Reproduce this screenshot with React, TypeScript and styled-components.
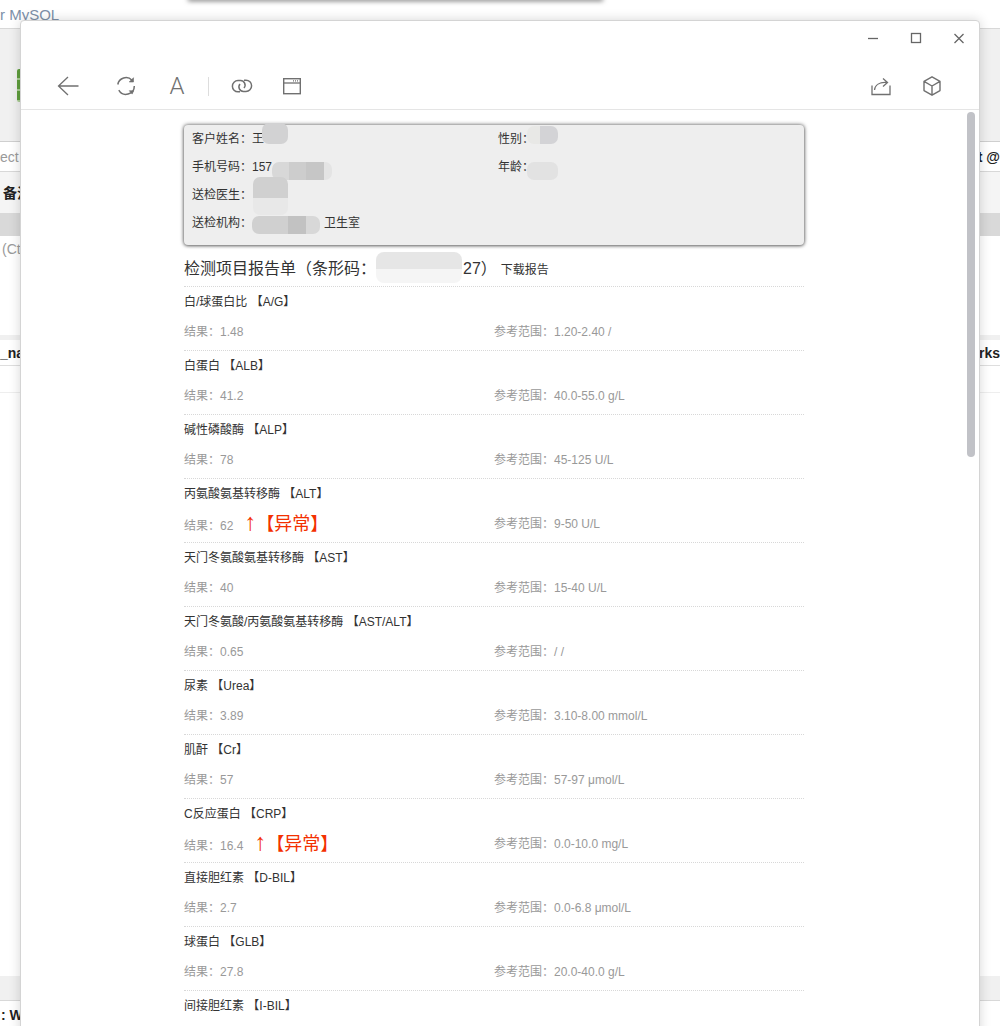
import React from "react";
import styled, { createGlobalStyle } from "styled-components";

const Global = createGlobalStyle`
  html, body { margin: 0; padding: 0; height: 1026px; overflow: hidden; background: #fff; }
  #root { height: 1026px; }
  * { box-sizing: border-box; text-spacing-trim: space-all; }
`;
const sans = `"Liberation Sans", "Noto Sans CJK SC", sans-serif`;

const Page = styled.div`
  position: relative; width: 1000px; height: 1026px; overflow: hidden; font-family: ${sans}; background: #fff;
`;
/* background application behind the dialog */
const BackRow = styled.div<{ $h: number; $bg?: string; $line?: string }>`
  height: ${(p) => p.$h}px;
  background: ${(p) => p.$bg || "#fff"};
  border-bottom: 1px solid ${(p) => p.$line || "transparent"};
  display: flex; align-items: center; justify-content: space-between;
  font-size: 14px; color: #222; white-space: nowrap;
`;
const BackTitle = styled.span`font-size: 15px; color: #7d90a9;`;
const BackMuted = styled.span`color: #9a9a9a; font-size: 14px;`;
const BackStrong = styled.span`font-weight: 700; font-size: 14px; color: #222;`;
const BackLeft = styled.span<{ $pad: number; $pt?: number }>`
  padding-left: ${(p) => p.$pad}px; padding-top: ${(p) => p.$pt || 0}px;
`;
const GreenTool = styled.div`
  width: 20px; height: 33px; margin-left: 17px; border-radius: 2px;
  background: repeating-linear-gradient(#5f9e3d 0 9px, #a9cc93 9px 11px);
`;
const TopShadow = styled.div`
  position: absolute; left: 188px; top: -4px; width: 415px; height: 4px; background: #888;
  box-shadow: 0 1px 5px rgba(0,0,0,.55);
`;
/* dialog */
const Dialog = styled.div`
  position: absolute; left: 20px; top: 20px; width: 960px; height: 1020px;
  display: flex; flex-direction: column;
  background: #fff; border: 1px solid #d4d4d4; border-radius: 4px 4px 0 0;
  box-shadow: 0 0 12px rgba(0,0,0,.16);
`;
const TitleBar = styled.div`
  height: 34px; flex: none; display: flex; justify-content: flex-end; align-items: center; gap: 17px; padding: 0 7px 0 0;
`;
const WinBtn = styled.div`
  width: 26px; height: 26px; display: flex; align-items: center; justify-content: center; color: #666;
`;
const Toolbar = styled.div`
  height: 55px; flex: none; display: flex; align-items: center; justify-content: space-between;
  padding: 8px 35px 0 35px; border-bottom: 1px solid #e5e5e5;
`;
const ToolGroup = styled.div`display: flex; align-items: center;`;
const ToolBtn = styled.div<{ $ml?: number }>`
  width: 24px; height: 24px; margin-left: ${(p) => p.$ml || 0}px;
  display: flex; align-items: center; justify-content: center; color: #707070;
`;
const LetterIcon = styled.span`
  font-family: "Roboto", sans-serif; font-weight: 300; font-size: 24px; line-height: 24px; color: #707070;
`;
const Sep = styled.div`width: 1px; height: 19px; background: #ddd; margin-left: 19px;`;
const Body = styled.div`
  flex: 1; min-height: 0; position: relative; overflow: hidden; padding: 15px 0 0 163px;
`;
const Scrollbar = styled.div`
  position: absolute; left: 946px; top: 2px; width: 8px; height: 345px; border-radius: 4px; background: #c1c2c7;
`;
const Column = styled.div`width: 620px;`;
const Card = styled.div`
  position: relative; height: 120px; padding: 0 8px; background: #eee; border-radius: 4px;
  box-shadow: 0 0 4px rgba(0,0,0,.65), 0 1px 3px rgba(0,0,0,.3);
  display: grid; grid-template-columns: 306px 1fr; grid-auto-rows: 28px; align-content: start;
  font-size: 12px; color: #333;
`;
const CardCell = styled.div`line-height: 28px; white-space: nowrap;`;
const Patch = styled.div<{ $x: number; $y: number; $w: number; $h: number; $bg: string; $r?: number }>`
  position: absolute; left: ${(p) => p.$x}px; top: ${(p) => p.$y}px; width: ${(p) => p.$w}px; height: ${(p) => p.$h}px;
  background: ${(p) => p.$bg}; border-radius: ${(p) => p.$r ?? 7}px;
`;
const Heading = styled.div`
  height: 41px; display: flex; align-items: center; font-size: 16px; color: #333; white-space: nowrap; padding-top: 3px;
`;
const BarPatch = styled.span`
  display: inline-block; width: 86px; height: 31px; border-radius: 8px; margin: 0 1px 0 0;
  background: linear-gradient(#e6e6e6 0 17px, #f5f5f5 17px);
`;
const DownloadLink = styled.span`font-size: 12px; margin-left: 4px; padding-top: 2px;`;
const Row = styled.div`
  height: 64px; border-top: 1px dotted #d8d8d8; font-size: 12px;
`;
const RowTitle = styled.div`height: 32px; line-height: 30px; color: #333; white-space: nowrap;`;
const RowValues = styled.div`height: 31px; display: grid; grid-template-columns: 310px 1fr; color: #999;`;
const ValueCell = styled.div<{ $alert?: boolean }>`
  line-height: 27px; white-space: nowrap; padding-top: ${(p) => (p.$alert ? 2 : 0)}px;
`;
const Alert = styled.span`
  font-size: 18px; line-height: 18px; color: #f33000; margin-left: 11px;
`;
const AlertArrow = styled.span`font-size: 24px; line-height: 18px;`;

const Icon = ({ w, h, children }: { w: number; h: number; children: React.ReactNode }) => (
  <svg width={w} height={h} viewBox={`0 0 ${w} ${h}`} fill="none" stroke="currentColor" strokeWidth="1.3">
    {children}
  </svg>
);

const rows: { name: string; result: string; range: string; alert?: boolean }[] = [
  { name: "白/球蛋白比 【A/G】", result: "1.48", range: "1.20-2.40 /" },
  { name: "白蛋白 【ALB】", result: "41.2", range: "40.0-55.0 g/L" },
  { name: "碱性磷酸酶 【ALP】", result: "78", range: "45-125 U/L" },
  { name: "丙氨酸氨基转移酶 【ALT】", result: "62", range: "9-50 U/L", alert: true },
  { name: "天门冬氨酸氨基转移酶 【AST】", result: "40", range: "15-40 U/L" },
  { name: "天门冬氨酸/丙氨酸氨基转移酶 【AST/ALT】", result: "0.65", range: "/ /" },
  { name: "尿素 【Urea】", result: "3.89", range: "3.10-8.00 mmol/L" },
  { name: "肌酐 【Cr】", result: "57", range: "57-97 μmol/L" },
  { name: "C反应蛋白 【CRP】", result: "16.4", range: "0.0-10.0 mg/L", alert: true },
  { name: "直接胆红素 【D-BIL】", result: "2.7", range: "0.0-6.8 μmol/L" },
  { name: "球蛋白 【GLB】", result: "27.8", range: "20.0-40.0 g/L" },
  { name: "间接胆红素 【I-BIL】", result: "", range: "" },
];

export default function App() {
  return (
    <Page>
      <Global />
      <BackRow $h={29} $line="#d8d8d8"><BackTitle>r MySQL</BackTitle></BackRow>
      <BackRow $h={113} $bg="#f0f0f0" $line="#cfcfcf"><GreenTool /></BackRow>
      <BackRow $h={30} $line="#d8d8d8">
        <BackMuted>ect</BackMuted><BackStrong>nt @</BackStrong>
      </BackRow>
      <BackRow $h={41} $bg="#f5f5f5">
        <BackLeft $pad={3}><BackStrong>备注</BackStrong></BackLeft>
      </BackRow>
      <BackRow $h={23} $bg="#d9d9d9" />
      <BackRow $h={26}><BackLeft $pad={2}><BackMuted>(Ctrl</BackMuted></BackLeft></BackRow>
      <BackRow $h={73} />
      <BackRow $h={5} $bg="#f0f0f0" />
      <BackRow $h={26} $line="#dedede">
        <BackStrong>_name</BackStrong><BackStrong>rks</BackStrong>
      </BackRow>
      <BackRow $h={27} $line="#eeeeee" />
      <BackRow $h={583} />
      <BackRow $h={25} $bg="#f0f0f0" $line="#d8d8d8" />
      <BackRow $h={26}><BackLeft $pad={1} $pt={3}><BackStrong>: W</BackStrong></BackLeft></BackRow>
      <TopShadow />

      <Dialog>
        <TitleBar>
          <WinBtn><Icon w={12} h={12}><path d="M1 6.500h10" /></Icon></WinBtn>
          <WinBtn><Icon w={12} h={12}><rect x="1.500" y="1.500" width="9" height="9" /></Icon></WinBtn>
          <WinBtn><Icon w={12} h={12}><path d="M1.500 2l9 9M10.500 2l-9 9" /></Icon></WinBtn>
        </TitleBar>
        <Toolbar>
          <ToolGroup>
            <ToolBtn>
              <Icon w={24} h={24}><path d="M2.500 12h20M12 3L2.500 12l9.500 9" /></Icon>
            </ToolBtn>
            <ToolBtn $ml={34}>
              <Icon w={24} h={24}>
                <path d="M3.800 10.500A8.300 8.300 0 0 1 18 6.200" strokeWidth="1.500" />
                <path d="M19.500 3.700v4.300h-4.300z" fill="currentColor" strokeWidth="0.600" />
                <path d="M20.300 12A8.300 8.300 0 0 1 4.800 16.200" strokeWidth="1.500" />
                <path d="M15.300 16.700h4.300l-1.400 3.400z" fill="currentColor" strokeWidth="0.600" />
              </Icon>
            </ToolBtn>
            <ToolBtn $ml={27}><LetterIcon>A</LetterIcon></ToolBtn>
            <Sep />
            <ToolBtn $ml={21}>
              <Icon w={24} h={24}>
                <path d="M10 17.800H8a5.600 5.600 0 0 1 0-11.200h2.500a4.500 4.500 0 0 1 3.500 7.400" strokeWidth="1.500" />
                <path d="M14 6.200h2a5.600 5.600 0 0 1 0 11.200h-2.500a4.500 4.500 0 0 1-3.500-7.400" strokeWidth="1.500" />
              </Icon>
            </ToolBtn>
            <ToolBtn $ml={26}>
              <Icon w={24} h={24}>
                <rect x="3.700" y="4.700" width="16.600" height="15" strokeWidth="1.400" />
                <path d="M3.700 9h16.600" />
                <path d="M13 6.900h5" strokeDasharray="1 1" />
              </Icon>
            </ToolBtn>
          </ToolGroup>
          <ToolGroup>
            <ToolBtn>
              <Icon w={24} h={24}>
                <path d="M3 11.500v9h18v-9" />
                <path d="M5.500 16c.5-5 5-8 12-7.500M14 4.500l4.500 4-4.500 4" />
              </Icon>
            </ToolBtn>
            <ToolBtn $ml={27}>
              <Icon w={24} h={24}>
                <path d="M12 2.800l8 4.600v9.200l-8 4.600-8-4.600V7.400zM4 7.400l8 4.600 8-4.600M12 12v9.200" strokeWidth="1.400" strokeLinejoin="round" />
              </Icon>
            </ToolBtn>
          </ToolGroup>
        </Toolbar>
        <Body>
          <Scrollbar />
          <Column>
            <Card>
              <CardCell>客户姓名：王</CardCell><CardCell>性别：</CardCell>
              <CardCell>手机号码：157</CardCell><CardCell>年龄：</CardCell>
              <CardCell>送检医生：</CardCell><CardCell />
              <CardCell>送检机构：　　　　　　卫生室</CardCell><CardCell />
              <Patch $x={78} $y={-2} $w={26} $h={21} $bg="#d2d2d3" />
              <Patch $x={343} $y={1} $w={31} $h={18} $bg="linear-gradient(90deg,#e8e8e6 0 13px,#d3d3d6 13px)" />
              <Patch $x={88} $y={37} $w={60} $h={18} $bg="linear-gradient(90deg,#d8d8d8 0 17px,#cdcdcd 17px 34px,#c6c6c6 34px 52px,#e4e4e4 52px)" />
              <Patch $x={343} $y={37} $w={31} $h={18} $bg="#e2e2e2" />
              <Patch $x={69} $y={52} $w={35} $h={38} $bg="linear-gradient(#d0d0d0 0 21px,#e8e8e8 21px)" />
              <Patch $x={68} $y={91} $w={68} $h={18} $bg="linear-gradient(90deg,#d0d0d0 0 36px,#c2c2c2 36px 54px,#d8d8d8 54px)" />
            </Card>
            <Heading>
              检测项目报告单（条形码：<BarPatch />27）<DownloadLink>下载报告</DownloadLink>
            </Heading>
            {rows.map((r) => (
              <Row key={r.name}>
                <RowTitle>{r.name}</RowTitle>
                {r.result && (
                  <RowValues>
                    <ValueCell $alert={r.alert}>
                      结果：{r.result}
                      {r.alert && <Alert><AlertArrow>↑</AlertArrow>【异常】</Alert>}
                    </ValueCell>
                    <ValueCell>参考范围：{r.range}</ValueCell>
                  </RowValues>
                )}
              </Row>
            ))}
          </Column>
        </Body>
      </Dialog>
    </Page>
  );
}
